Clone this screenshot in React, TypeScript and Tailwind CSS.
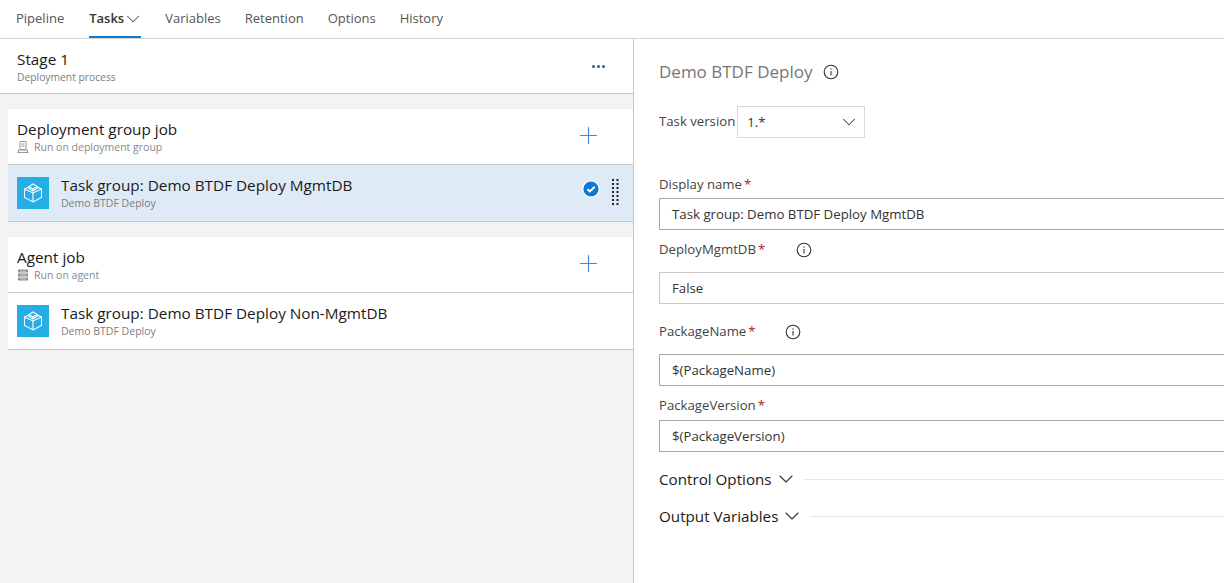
import React from "react";
import { ChevronDown, Plus } from "lucide-react";

const font = "font-['Open_Sans','Noto_Sans',sans-serif]";

const tabs = ["Pipeline", "Tasks", "Variables", "Retention", "Options", "History"];

function InfoIcon() {
  return (
    <svg width="16" height="16" viewBox="0 0 16 16" fill="none" stroke="#333" className="shrink-0">
      <circle cx="8" cy="8" r="6.8" strokeWidth="1.1" />
      <path d="M8 7v4.5" strokeWidth="1.1" />
      <circle cx="8" cy="5" r="0.7" fill="#333" stroke="none" />
    </svg>
  );
}

function TaskIcon() {
  return (
    <div className="w-8 h-8 bg-[#25aee6] flex items-center justify-center shrink-0">
      <svg width="20" height="20" viewBox="0 0 20 20" fill="none" stroke="#fff" strokeWidth="1.1">
        <path d="M1.5 6 L10 10 L18.5 6 V14.5 L10 19 L1.5 14.5 Z" />
        <path d="M10 10 V19" />
        <path d="M1.5 6 L6 4 M18.5 6 L14 4" />
        <path d="M6 3.5 L10 1 L14 3.5 L10 6 Z" />
        <path d="M6 3.5 V5.5 L10 8 L14 5.5 V3.5 M10 6 V8" />
      </svg>
    </div>
  );
}

function DeployGroupIcon() {
  return (
    <svg width="12" height="12" viewBox="0 0 12 12" fill="none" stroke="#999" strokeWidth="1" className="shrink-0">
      <path d="M3 .5h6v8H3z" />
      <path d="M4.5 3h3M4.5 5h3" />
      <path d="M.5 11.5h11M1.5 11V9h9v2" />
    </svg>
  );
}

function AgentIcon() {
  return (
    <svg width="12" height="12" viewBox="0 0 12 12" className="shrink-0">
      <rect x="1" y="0.5" width="10" height="11" fill="#8f8f8f" />
      <path d="M1 4h10M1 8h10" stroke="#fff" strokeWidth="1" />
      <path d="M3 2.2h6M3 6h6M3 9.8h6" stroke="#d0d0d0" strokeWidth="1" />
    </svg>
  );
}

function CheckBadge() {
  return (
    <svg width="18" height="18" viewBox="0 0 18 18" className="shrink-0 mb-[8px]">
      <circle cx="9" cy="9" r="8.8" fill="#fff" />
      <circle cx="9" cy="9" r="7.6" fill="#0f78d4" />
      <path d="M5.4 9.2 L7.9 11.5 L12.7 6.8" fill="none" stroke="#fff" strokeWidth="1.9" />
    </svg>
  );
}

function Gripper() {
  return (
    <svg width="7" height="28" viewBox="0 0 7 28" fill="#222" className="shrink-0">
      {[0, 4, 8, 12, 16, 20, 24].map((y) => (
        <React.Fragment key={y}>
          <rect x="0" y={y} width="2" height="2" />
          <rect x="4.5" y={y} width="2" height="2" />
        </React.Fragment>
      ))}
    </svg>
  );
}

function JobHeader({ title, sub, icon }: { title: string; sub: string; icon: React.ReactNode }) {
  return (
    <div className="h-[56px] bg-white border-b border-[#c8c8c8] flex items-center pl-[9px] pr-[31px]">
      <div className="flex-1 min-w-0 pt-[1px]">
        <div className="text-[15.3px] leading-[18px] text-[#1a1a1a]">{title}</div>
        <div className="mt-[2px] flex items-center gap-[5px] text-[10.5px] leading-[14px] text-[#8a8a8a]">
          {icon}
          <span>{sub}</span>
        </div>
      </div>
      <Plus size={27} strokeWidth={1} className="text-[#3d86d2] mb-[3px]" />
    </div>
  );
}

function TaskRow({ title, selected }: { title: string; selected?: boolean }) {
  return (
    <div
      className={`h-[57px] border-b border-[#c8c8c8] flex items-center pl-[9px] pr-[14px] ${
        selected ? "bg-[#deeaf6]" : "bg-white"
      }`}
    >
      <TaskIcon />
      <div className="ml-[12px] flex-1 min-w-0">
        <div className="text-[15.3px] leading-[18px] text-[#1a1a1a]">{title}</div>
        <div className="mt-[2px] text-[10.5px] leading-[14px] text-[#7d7d7d]">Demo BTDF Deploy</div>
      </div>
      {selected && (
        <div className="flex items-center gap-[12px]">
          <CheckBadge />
          <Gripper />
        </div>
      )}
    </div>
  );
}

function Field({
  label,
  value,
  info,
  light,
  gap,
  labelHeight,
  className,
}: {
  label: string;
  value: string;
  info?: boolean;
  light?: boolean;
  gap?: string;
  labelHeight: string;
  className?: string;
}) {
  return (
    <div className={className}>
      <div className={`flex items-center text-[13.2px] text-[#444] ${labelHeight}`}>
        <span>{label}</span>
        <span className="ml-[2px] text-[#a4262c]">*</span>
        {info && (
          <span className={gap}>
            <InfoIcon />
          </span>
        )}
      </div>
      <div
        className={`h-[32px] w-[600px] border flex items-center pl-[12px] pt-[2px] text-[13.25px] text-[#333] ${
          light ? "border-[#c8c8c8]" : "border-[#a6a6a6]"
        }`}
      >
        {value}
      </div>
    </div>
  );
}

function Section({ title, rule, className }: { title: string; rule: string; className?: string }) {
  return (
    <div className={`flex items-center h-[22px] ${className ?? ""}`}>
      <span className="text-[15.2px] text-[#1a1a1a] whitespace-nowrap">{title}</span>
      <ChevronDown size={24} strokeWidth={1.1} className="ml-[2px] text-[#333] shrink-0" />
      <div className={`flex-1 h-px bg-[#e6e6e6] ${rule}`} />
    </div>
  );
}

export default function App() {
  return (
    <div className={`w-[1224px] h-[583px] overflow-hidden bg-white flex flex-col ${font}`}>
      {/* top tabs */}
      <div className="h-[39px] border-b border-[#d4d4d4] flex pl-[16px] gap-[24px] shrink-0">
        {tabs.map((t) => {
          const active = t === "Tasks";
          return (
            <div
              key={t}
              className={`h-[38px] flex items-center text-[13px] ${
                active ? "ml-[1px] border-b-2 border-[#0f78d4] text-[#333] font-semibold pt-[2px]" : "text-[#555] "
              }`}
            >
              {t}
              {active && <ChevronDown size={22} strokeWidth={1.1} className="ml-[-2px] mr-[-3px] text-[#555]" />}
            </div>
          );
        })}
      </div>

      <div className="flex flex-1 min-h-0">
        {/* left */}
        <div className="w-[634px] shrink-0 border-r border-[#c8c8c8] bg-[#f3f3f3]">
          <div className="h-[55px] bg-white border-b border-[#c8c8c8] flex items-center pl-[17px] pr-[28px]">
            <div className="flex-1 pt-[1px]">
              <div className="text-[15.3px] leading-[20px] text-[#1a1a1a]">Stage 1</div>
              <div className="mt-[1px] text-[10.3px] leading-[14px] text-[#7d7d7d]">Deployment process</div>
            </div>
            <div className="flex gap-[2px]">
              <span className="w-[3px] h-[3px] rounded-full bg-[#1f5f9e]" />
              <span className="w-[3px] h-[3px] rounded-full bg-[#1f5f9e]" />
              <span className="w-[3px] h-[3px] rounded-full bg-[#1f5f9e]" />
            </div>
          </div>
          <div className="pl-[8px] pt-[15px]">
            <JobHeader title="Deployment group job" sub="Run on deployment group" icon={<DeployGroupIcon />} />
            <TaskRow title="Task group: Demo BTDF Deploy MgmtDB" selected />
            <div className="h-[15px]" />
            <JobHeader title="Agent job" sub="Run on agent" icon={<AgentIcon />} />
            <TaskRow title="Task group: Demo BTDF Deploy Non-MgmtDB" />
          </div>
        </div>

        {/* right */}
        <div className="flex-1 min-w-0 overflow-hidden pl-[25px]">
          <div className="flex items-center gap-[11px] h-[24px] mt-[21px]">
            <span className="text-[17px] text-[#767676]">Demo BTDF Deploy</span>
            <InfoIcon />
          </div>
          <div className="flex items-center gap-[2px] mt-[22px]">
            <span className="text-[13.2px] text-[#444]">Task version</span>
            <div className="w-[128px] h-[32px] border border-[#d8d8d8] flex items-center justify-between pl-[9px] pr-[4px] pt-[2px] text-[13.2px] text-[#333]">
              1.*
              <ChevronDown size={22} strokeWidth={1.1} className="text-[#444] mb-[2px]" />
            </div>
          </div>
          <Field className="mt-[34px]" labelHeight="h-[26px]" label="Display name" value="Task group: Demo BTDF Deploy MgmtDB" />
          <Field className="mt-[5px]" labelHeight="h-[37px] pb-[8px]" label="DeployMgmtDB" value="False" info light gap="ml-[31px]" />
          <Field className="mt-[13px]" labelHeight="h-[37px] pb-[8px]" label="PackageName" value="$(PackageName)" info gap="ml-[29px]" />
          <Field className="mt-[6px]" labelHeight="h-[28px]" label="PackageVersion" value="$(PackageVersion)" />
          <Section className="mt-[16px]" title="Control Options" rule="ml-[6px]" />
          <Section className="mt-[15px]" title="Output Variables" rule="ml-[6px]" />
        </div>
      </div>
    </div>
  );
}
